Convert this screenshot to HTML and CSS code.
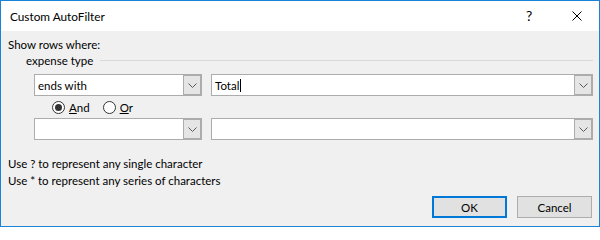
FILE: index.html
```html
<!DOCTYPE html>
<html>
<head>
<meta charset="utf-8">
<link rel="stylesheet" href="styles.css">
</head>
<body>
<div class="window">
  <div class="titlebar">
    <div class="title">Custom AutoFilter</div>
    <div class="help">?</div>
    <div class="close">
      <svg width="10" height="10" viewBox="0 0 10 10"><path d="M0.5 0.5 L9.5 9.5 M9.5 0.5 L0.5 9.5" stroke="#000" stroke-width="1" fill="none"/></svg>
    </div>
  </div>
  <div class="content">
    <div class="label">Show rows where:</div>
    <div class="group-header">
      <span class="group-name">expense type</span>
      <span class="group-line"></span>
    </div>
    <div class="criteria-row first">
      <div class="combo op">
        <span class="combo-text">ends with</span>
        <span class="combo-btn"><svg width="9" height="5" viewBox="0 0 9 5"><polyline points="0.5,0.5 4.5,4.5 8.5,0.5" stroke="#5a5a5a" stroke-width="1" fill="none"/></svg></span>
      </div>
      <div class="combo value">
        <span class="combo-text">Total<span class="caret"></span></span>
        <span class="combo-btn"><svg width="9" height="5" viewBox="0 0 9 5"><polyline points="0.5,0.5 4.5,4.5 8.5,0.5" stroke="#5a5a5a" stroke-width="1" fill="none"/></svg></span>
      </div>
    </div>
    <div class="radio-row">
      <label class="radio"><span class="circle checked"></span><span><u>A</u>nd</span></label>
      <label class="radio"><span class="circle"></span><span><u>O</u>r</span></label>
    </div>
    <div class="criteria-row">
      <div class="combo op">
        <span class="combo-text"></span>
        <span class="combo-btn"><svg width="9" height="5" viewBox="0 0 9 5"><polyline points="0.5,0.5 4.5,4.5 8.5,0.5" stroke="#5a5a5a" stroke-width="1" fill="none"/></svg></span>
      </div>
      <div class="combo value">
        <span class="combo-text"></span>
        <span class="combo-btn"><svg width="9" height="5" viewBox="0 0 9 5"><polyline points="0.5,0.5 4.5,4.5 8.5,0.5" stroke="#5a5a5a" stroke-width="1" fill="none"/></svg></span>
      </div>
    </div>
    <div class="hints">
      <div>Use ? to represent any single character</div>
      <div>Use * to represent any series of characters</div>
    </div>
    <div class="buttons">
      <button class="btn default">OK</button>
      <button class="btn">Cancel</button>
    </div>
  </div>
</div>
</body>
</html>
```
FILE: styles.css
```css
* { box-sizing: border-box; }
html, body { margin: 0; padding: 0; background: #ffffff; }
body {
  font-family: Lato, "Noto Sans", sans-serif;
  font-size: 11.5px;
  line-height: 15px;
  color: #000;
}
.window {
  width: 600px;
  height: 227px;
  border: 1px solid #1883d7;
  display: flex;
  flex-direction: column;
  background: #f0f0f0;
}
.titlebar {
  height: 30px;
  background: #fff;
  display: flex;
  align-items: center;
  padding-left: 9px;
  flex-shrink: 0;
}
.title { flex: 1; font-size: 11.8px; }
.help {
  font-size: 14px;
  width: 10px;
  margin-right: 36px;
  margin-top: -1px;
}
.close {
  width: 10px;
  height: 10px;
  margin-right: 17px;
  display: flex;
  margin-top: -1px;
}
.close svg { display: block; }
.content {
  flex: 1;
  display: flex;
  flex-direction: column;
  padding: 6px 6px 8px 7px;
}
.group-header {
  display: flex;
  align-items: center;
  margin-left: 18px;
  margin-top: 1px;
}
.group-line {
  flex: 1;
  height: 1px;
  background: #d9d9d9;
  margin-left: 7px;
}
.criteria-row {
  display: flex;
  gap: 9px;
  margin-left: 26px;
  height: 22px;
}
.criteria-row.first { margin-top: 6px; }
.combo {
  display: flex;
  border: 1px solid #acacac;
  background: #fff;
}
.combo.op { width: 168px; }
.combo.value { flex: 1; }
.combo-text {
  flex: 1;
  padding-left: 3px;
  display: flex;
  align-items: center;
}
.caret {
  display: inline-block;
  width: 1px;
  height: 13px;
  background: #000;
  margin-left: 1px;
}
.combo-btn {
  width: 18px;
  background: #e5e5e5;
  border: 1px solid #acacac;
  display: flex;
  align-items: center;
  justify-content: center;
}
.combo-btn svg { display: block; }
.radio-row {
  display: flex;
  margin-left: 44px;
  margin-top: 4px;
  margin-bottom: 4px;
  height: 14px;
  align-items: center;
  gap: 13px;
}
.radio {
  display: flex;
  align-items: center;
  gap: 4px;
}
.circle {
  width: 13px;
  height: 13px;
  border-radius: 50%;
  border: 1px solid #333;
  background: #fff;
  display: flex;
  align-items: center;
  justify-content: center;
}
.circle.checked::after {
  content: "";
  width: 7px;
  height: 7px;
  border-radius: 50%;
  background: #333;
}
.hints {
  margin-top: 15px;
  line-height: 17px;
}
.buttons {
  margin-top: auto;
  display: flex;
  justify-content: flex-end;
  gap: 10px;
  padding-right: 1px;
}
.btn {
  width: 75px;
  height: 22px;
  font-family: inherit;
  font-size: 11.5px;
  color: #000;
  background: #e1e1e1;
  border: 1px solid #adadad;
  padding: 0;
}
.btn.default { border: 2px solid #0078d7; }
```
